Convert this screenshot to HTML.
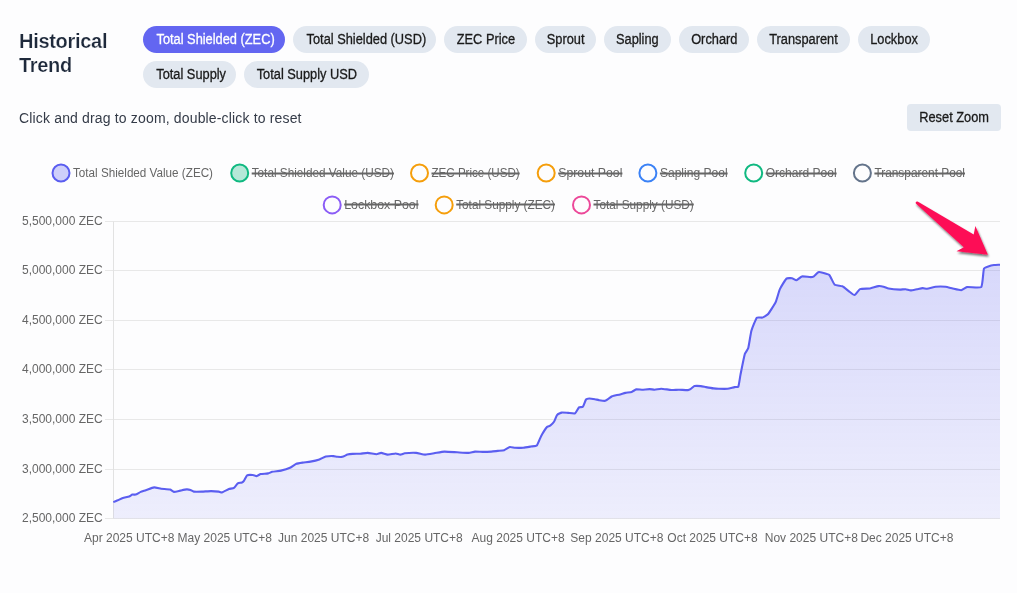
<!DOCTYPE html>
<html><head><meta charset="utf-8"><title>Historical Trend</title><style>
*{margin:0;padding:0;box-sizing:border-box}
html,body{width:1017px;height:593px;overflow:hidden;background:#fdfdfe;font-family:"Liberation Sans",sans-serif}
.h{position:absolute;left:19px;top:29px;font-size:20px;font-weight:bold;line-height:24px;color:#1e293b;letter-spacing:-0.3px;-webkit-text-stroke:0.22px #fdfdfe}
.b{position:absolute;height:26.5px;border-radius:14px;background:#e2e8f0;color:#1a1a1a;font-size:14px;display:flex;align-items:center;justify-content:center;white-space:nowrap}
.b span,.rz span{display:inline-block;transform:scaleX(0.915);-webkit-text-stroke:0.3px currentColor}
.b.on{background:#6366f1;color:#fff}
.hint{position:absolute;left:19px;top:110.4px;font-size:14px;color:#343b48;line-height:16px;letter-spacing:0.16px}
.rz{position:absolute;left:907px;top:104px;width:94px;height:27px;padding-bottom:1.4px;border-radius:4px;background:#e2e8f0;color:#1a1a1a;font-size:14px;display:flex;align-items:center;justify-content:center}
svg{position:absolute;left:0;top:0}
.wrap{position:absolute;left:0;top:0;width:1017px;height:593px;will-change:transform}
</style></head>
<body>
<div class="wrap">
<div class="h">Historical<br>Trend</div>
<div class="b on" style="left:143px;top:26.2px;width:142px;padding-left:3.0px"><span>Total Shielded (ZEC)</span></div><div class="b" style="left:293px;top:26.2px;width:143px;padding-left:3.0px"><span>Total Shielded (USD)</span></div><div class="b" style="left:444px;top:26.2px;width:83px;padding-left:0px"><span>ZEC Price</span></div><div class="b" style="left:535px;top:26.2px;width:61px;padding-left:0px"><span>Sprout</span></div><div class="b" style="left:604px;top:26.2px;width:67px;padding-left:0px"><span>Sapling</span></div><div class="b" style="left:679px;top:26.2px;width:70px;padding-left:0px"><span>Orchard</span></div><div class="b" style="left:757px;top:26.2px;width:93px;padding-left:0px"><span>Transparent</span></div><div class="b" style="left:858px;top:26.2px;width:72px;padding-left:0px"><span>Lockbox</span></div><div class="b" style="left:143px;top:61.2px;width:93px;padding-left:3.0px"><span>Total Supply</span></div><div class="b" style="left:244px;top:61.2px;width:125px;padding-left:0px"><span>Total Supply USD</span></div>
<div class="hint">Click and drag to zoom, double-click to reset</div>
<div class="rz"><span>Reset Zoom</span></div>
<svg width="1017" height="593" viewBox="0 0 1017 593" font-family="Liberation Sans, sans-serif"><defs><linearGradient id="g" x1="0" y1="264" x2="0" y2="518.4" gradientUnits="userSpaceOnUse"><stop offset="0" stop-color="#6366f1" stop-opacity="0.24"/><stop offset="1" stop-color="#6366f1" stop-opacity="0.10"/></linearGradient><filter id="sh" x="-20%" y="-20%" width="150%" height="150%"><feGaussianBlur in="SourceAlpha" stdDeviation="1.3"/><feOffset dx="1" dy="2"/><feComponentTransfer><feFuncA type="linear" slope="0.55"/></feComponentTransfer><feMerge><feMergeNode/><feMergeNode in="SourceGraphic"/></feMerge></filter></defs><line x1="105" y1="221.5" x2="1000" y2="221.5" stroke="#e8e8e8" stroke-width="1"/><text x="102.7" y="225.3" text-anchor="end" font-size="12" fill="#666">5,500,000 ZEC</text><line x1="105" y1="270.5" x2="1000" y2="270.5" stroke="#e8e8e8" stroke-width="1"/><text x="102.7" y="274.3" text-anchor="end" font-size="12" fill="#666">5,000,000 ZEC</text><line x1="105" y1="320.5" x2="1000" y2="320.5" stroke="#e8e8e8" stroke-width="1"/><text x="102.7" y="324.3" text-anchor="end" font-size="12" fill="#666">4,500,000 ZEC</text><line x1="105" y1="369.5" x2="1000" y2="369.5" stroke="#e8e8e8" stroke-width="1"/><text x="102.7" y="373.3" text-anchor="end" font-size="12" fill="#666">4,000,000 ZEC</text><line x1="105" y1="419.5" x2="1000" y2="419.5" stroke="#e8e8e8" stroke-width="1"/><text x="102.7" y="423.3" text-anchor="end" font-size="12" fill="#666">3,500,000 ZEC</text><line x1="105" y1="469.5" x2="1000" y2="469.5" stroke="#e8e8e8" stroke-width="1"/><text x="102.7" y="473.3" text-anchor="end" font-size="12" fill="#666">3,000,000 ZEC</text><line x1="105" y1="518.5" x2="1000" y2="518.5" stroke="#e8e8e8" stroke-width="1"/><text x="102.7" y="522.3" text-anchor="end" font-size="12" fill="#666">2,500,000 ZEC</text><line x1="113.5" y1="221.5" x2="113.5" y2="518.5" stroke="#e2e2e2" stroke-width="1"/><path d="M113.30 502.10 C113.96 501.83 117.05 500.58 117.70 500.30 C118.47 499.97 122.01 498.26 122.80 498.00 C123.73 497.69 128.28 496.83 129.20 496.50 C129.72 496.32 131.88 494.75 132.40 494.60 C132.84 494.47 135.16 494.74 135.60 494.60 C136.40 494.34 139.91 492.23 140.70 491.90 C141.44 491.59 145.04 490.56 145.80 490.30 C147.05 489.88 152.83 487.52 154.10 487.40 C155.13 487.30 160.04 488.65 161.10 488.80 C162.44 488.98 168.81 489.29 170.10 489.60 C170.73 489.75 173.28 491.84 173.90 491.90 C174.81 491.99 179.34 490.79 180.30 490.60 C181.26 490.41 185.74 489.46 186.70 489.40 C187.27 489.37 189.96 489.83 190.50 490.00 C191.01 490.16 193.18 491.53 193.70 491.60 C194.91 491.77 200.76 491.64 202.00 491.60 C203.35 491.56 209.65 491.10 211.00 491.10 C212.16 491.10 217.56 491.45 218.70 491.60 C219.19 491.66 221.44 492.61 221.90 492.50 C222.97 492.24 227.82 489.52 228.90 489.10 C229.63 488.82 233.37 488.21 234.00 487.80 C234.71 487.34 237.10 483.76 237.80 483.30 C238.30 482.97 241.43 482.73 242.00 482.50 C242.34 482.36 243.68 481.11 243.90 480.80 C244.45 480.03 246.39 475.75 247.10 475.30 C247.74 474.88 252.04 474.93 252.90 475.00 C253.48 475.05 256.15 476.16 256.70 476.10 C257.31 476.03 259.97 474.25 260.60 474.10 C261.70 473.84 267.09 473.62 268.20 473.40 C268.81 473.28 271.49 471.93 272.10 471.80 C273.41 471.51 279.69 470.89 281.00 470.60 C282.37 470.29 288.72 468.37 290.00 467.80 C291.03 467.35 295.37 464.22 296.40 463.80 C297.28 463.44 301.75 462.75 302.70 462.60 C303.85 462.42 309.26 461.82 310.40 461.60 C311.76 461.34 318.09 459.84 319.40 459.40 C320.40 459.07 324.79 456.74 325.80 456.50 C326.89 456.24 332.27 456.07 333.40 456.10 C333.99 456.12 336.71 456.75 337.30 456.80 C338.06 456.86 341.67 456.96 342.40 456.80 C343.20 456.63 346.71 454.83 347.50 454.60 C348.24 454.39 351.83 453.95 352.60 453.90 C353.75 453.82 359.15 453.78 360.30 453.70 C361.41 453.63 366.59 452.87 367.70 452.90 C369.04 452.94 375.28 454.20 376.60 454.20 C377.29 454.20 380.42 452.88 381.10 452.90 C382.06 452.94 386.53 454.56 387.50 454.60 C388.73 454.65 394.56 453.50 395.80 453.50 C396.48 453.50 399.63 454.62 400.30 454.60 C400.96 454.59 404.02 453.37 404.70 453.30 C406.41 453.12 414.49 452.79 416.20 452.90 C417.56 452.99 423.85 454.57 425.20 454.60 C426.53 454.63 432.77 453.51 434.10 453.30 C435.65 453.06 442.84 451.67 444.40 451.60 C446.29 451.52 455.19 452.20 457.10 452.30 C458.84 452.39 466.97 452.97 468.70 452.90 C469.66 452.86 474.04 451.67 475.00 451.60 C476.14 451.52 481.54 451.90 482.70 451.90 C484.00 451.90 490.10 451.69 491.40 451.60 C492.36 451.54 496.84 451.00 497.80 450.90 C498.76 450.79 503.30 450.49 504.20 450.20 C505.11 449.91 508.99 447.20 509.90 447.00 C510.61 446.84 514.23 447.76 515.00 447.80 C516.24 447.86 522.06 447.80 523.30 447.70 C524.46 447.61 529.85 446.69 531.00 446.50 C531.87 446.36 536.25 446.07 536.80 445.50 C537.78 444.48 540.44 437.28 541.20 435.90 C541.97 434.51 545.98 428.15 547.00 427.00 C547.33 426.62 549.79 426.00 550.20 425.70 C550.84 425.22 553.56 422.48 554.00 421.80 C554.61 420.84 556.50 415.64 557.20 414.80 C557.66 414.26 560.98 412.73 561.70 412.60 C562.62 412.44 567.14 412.85 568.10 412.90 C569.15 412.95 574.29 413.71 575.10 413.30 C575.92 412.89 578.25 408.02 579.00 407.40 C579.41 407.06 582.46 407.28 582.80 406.90 C583.51 406.10 585.32 400.39 586.00 399.50 C586.28 399.13 588.71 398.52 589.20 398.50 C590.04 398.47 594.05 399.06 594.90 399.20 C595.49 399.30 598.21 400.01 598.80 400.10 C599.75 400.25 604.33 401.05 605.20 400.80 C606.25 400.51 610.61 397.09 611.60 396.50 C611.90 396.32 613.46 395.78 613.80 395.70 C614.75 395.47 619.25 394.63 620.20 394.40 C620.97 394.21 624.52 393.07 625.30 392.90 C626.25 392.69 630.79 392.19 631.70 391.90 C632.42 391.67 635.47 389.56 636.20 389.40 C637.02 389.23 641.13 389.72 642.00 389.70 C643.14 389.67 648.46 389.10 649.60 389.10 C650.37 389.10 653.94 389.73 654.70 389.70 C655.66 389.67 660.14 388.68 661.10 388.70 C662.64 388.73 669.85 389.91 671.40 390.00 C672.54 390.06 677.86 389.69 679.00 389.70 C680.35 389.71 686.67 390.17 688.00 390.10 C688.40 390.08 690.16 389.31 690.50 389.10 C691.12 388.71 693.73 386.30 694.40 386.10 C695.27 385.85 699.85 386.02 700.80 386.10 C701.57 386.17 705.13 386.96 705.90 387.10 C707.04 387.31 712.35 388.25 713.50 388.40 C714.27 388.50 717.92 388.78 718.70 388.80 C720.03 388.84 726.28 388.94 727.60 388.80 C728.67 388.69 733.54 387.31 734.60 387.10 C735.15 386.99 738.09 387.14 738.30 386.70 C738.98 385.26 740.14 376.41 740.50 374.60 C741.13 371.47 744.01 356.83 744.90 353.80 C745.17 352.89 747.94 349.21 748.20 348.30 C748.92 345.76 750.68 333.35 751.40 330.80 C751.98 328.75 755.71 319.03 756.90 317.60 C757.36 317.05 761.64 317.83 762.40 317.60 C763.29 317.33 767.29 315.01 767.90 314.30 C769.27 312.72 774.69 304.22 775.60 302.30 C776.49 300.44 779.04 290.98 779.90 289.10 C780.67 287.42 785.24 279.73 786.50 278.60 C787.06 278.10 791.21 278.06 792.00 278.20 C792.70 278.32 795.78 280.41 796.40 280.30 C797.26 280.14 800.97 276.61 801.90 276.40 C803.10 276.13 809.30 277.10 810.60 277.10 C811.10 277.10 813.49 276.66 813.90 276.40 C814.64 275.93 817.54 272.52 818.30 272.20 C818.86 271.97 822.06 272.54 822.70 272.70 C823.71 272.95 828.61 274.21 829.30 274.90 C830.41 276.01 833.55 283.70 834.70 284.70 C835.51 285.41 841.36 285.82 842.40 286.30 C843.50 286.81 847.99 290.58 849.00 291.30 C849.81 291.88 853.76 295.15 854.50 295.00 C855.41 294.82 858.96 289.53 860.00 289.10 C861.29 288.56 868.53 288.74 870.00 288.50 C871.30 288.29 877.21 286.27 878.50 286.10 C879.24 286.00 882.77 286.52 883.50 286.70 C884.27 286.88 887.72 288.36 888.50 288.50 C890.18 288.80 898.19 289.53 899.90 289.60 C900.75 289.63 904.76 289.14 905.60 289.20 C906.36 289.26 909.85 290.40 910.60 290.40 C911.56 290.40 916.04 289.38 917.00 289.20 C917.86 289.04 921.84 288.13 922.70 288.10 C923.34 288.07 926.36 288.86 927.00 288.80 C928.30 288.67 934.29 286.94 935.60 286.80 C937.07 286.64 944.03 286.65 945.50 286.80 C946.60 286.91 951.62 288.27 952.70 288.50 C953.97 288.78 959.98 290.32 961.20 290.20 C962.11 290.11 965.96 287.25 966.90 287.10 C968.96 286.78 980.09 288.30 981.20 287.10 C982.66 285.51 983.15 270.98 984.00 268.50 C984.22 267.87 987.63 266.64 988.30 266.40 C989.13 266.11 993.13 265.13 994.00 265.00 C994.89 264.87 999.10 264.75 1000.00 264.70 L1000 518.5 L113.5 518.5 Z" fill="url(#g)"/><path d="M113.30 502.10 C113.96 501.83 117.05 500.58 117.70 500.30 C118.47 499.97 122.01 498.26 122.80 498.00 C123.73 497.69 128.28 496.83 129.20 496.50 C129.72 496.32 131.88 494.75 132.40 494.60 C132.84 494.47 135.16 494.74 135.60 494.60 C136.40 494.34 139.91 492.23 140.70 491.90 C141.44 491.59 145.04 490.56 145.80 490.30 C147.05 489.88 152.83 487.52 154.10 487.40 C155.13 487.30 160.04 488.65 161.10 488.80 C162.44 488.98 168.81 489.29 170.10 489.60 C170.73 489.75 173.28 491.84 173.90 491.90 C174.81 491.99 179.34 490.79 180.30 490.60 C181.26 490.41 185.74 489.46 186.70 489.40 C187.27 489.37 189.96 489.83 190.50 490.00 C191.01 490.16 193.18 491.53 193.70 491.60 C194.91 491.77 200.76 491.64 202.00 491.60 C203.35 491.56 209.65 491.10 211.00 491.10 C212.16 491.10 217.56 491.45 218.70 491.60 C219.19 491.66 221.44 492.61 221.90 492.50 C222.97 492.24 227.82 489.52 228.90 489.10 C229.63 488.82 233.37 488.21 234.00 487.80 C234.71 487.34 237.10 483.76 237.80 483.30 C238.30 482.97 241.43 482.73 242.00 482.50 C242.34 482.36 243.68 481.11 243.90 480.80 C244.45 480.03 246.39 475.75 247.10 475.30 C247.74 474.88 252.04 474.93 252.90 475.00 C253.48 475.05 256.15 476.16 256.70 476.10 C257.31 476.03 259.97 474.25 260.60 474.10 C261.70 473.84 267.09 473.62 268.20 473.40 C268.81 473.28 271.49 471.93 272.10 471.80 C273.41 471.51 279.69 470.89 281.00 470.60 C282.37 470.29 288.72 468.37 290.00 467.80 C291.03 467.35 295.37 464.22 296.40 463.80 C297.28 463.44 301.75 462.75 302.70 462.60 C303.85 462.42 309.26 461.82 310.40 461.60 C311.76 461.34 318.09 459.84 319.40 459.40 C320.40 459.07 324.79 456.74 325.80 456.50 C326.89 456.24 332.27 456.07 333.40 456.10 C333.99 456.12 336.71 456.75 337.30 456.80 C338.06 456.86 341.67 456.96 342.40 456.80 C343.20 456.63 346.71 454.83 347.50 454.60 C348.24 454.39 351.83 453.95 352.60 453.90 C353.75 453.82 359.15 453.78 360.30 453.70 C361.41 453.63 366.59 452.87 367.70 452.90 C369.04 452.94 375.28 454.20 376.60 454.20 C377.29 454.20 380.42 452.88 381.10 452.90 C382.06 452.94 386.53 454.56 387.50 454.60 C388.73 454.65 394.56 453.50 395.80 453.50 C396.48 453.50 399.63 454.62 400.30 454.60 C400.96 454.59 404.02 453.37 404.70 453.30 C406.41 453.12 414.49 452.79 416.20 452.90 C417.56 452.99 423.85 454.57 425.20 454.60 C426.53 454.63 432.77 453.51 434.10 453.30 C435.65 453.06 442.84 451.67 444.40 451.60 C446.29 451.52 455.19 452.20 457.10 452.30 C458.84 452.39 466.97 452.97 468.70 452.90 C469.66 452.86 474.04 451.67 475.00 451.60 C476.14 451.52 481.54 451.90 482.70 451.90 C484.00 451.90 490.10 451.69 491.40 451.60 C492.36 451.54 496.84 451.00 497.80 450.90 C498.76 450.79 503.30 450.49 504.20 450.20 C505.11 449.91 508.99 447.20 509.90 447.00 C510.61 446.84 514.23 447.76 515.00 447.80 C516.24 447.86 522.06 447.80 523.30 447.70 C524.46 447.61 529.85 446.69 531.00 446.50 C531.87 446.36 536.25 446.07 536.80 445.50 C537.78 444.48 540.44 437.28 541.20 435.90 C541.97 434.51 545.98 428.15 547.00 427.00 C547.33 426.62 549.79 426.00 550.20 425.70 C550.84 425.22 553.56 422.48 554.00 421.80 C554.61 420.84 556.50 415.64 557.20 414.80 C557.66 414.26 560.98 412.73 561.70 412.60 C562.62 412.44 567.14 412.85 568.10 412.90 C569.15 412.95 574.29 413.71 575.10 413.30 C575.92 412.89 578.25 408.02 579.00 407.40 C579.41 407.06 582.46 407.28 582.80 406.90 C583.51 406.10 585.32 400.39 586.00 399.50 C586.28 399.13 588.71 398.52 589.20 398.50 C590.04 398.47 594.05 399.06 594.90 399.20 C595.49 399.30 598.21 400.01 598.80 400.10 C599.75 400.25 604.33 401.05 605.20 400.80 C606.25 400.51 610.61 397.09 611.60 396.50 C611.90 396.32 613.46 395.78 613.80 395.70 C614.75 395.47 619.25 394.63 620.20 394.40 C620.97 394.21 624.52 393.07 625.30 392.90 C626.25 392.69 630.79 392.19 631.70 391.90 C632.42 391.67 635.47 389.56 636.20 389.40 C637.02 389.23 641.13 389.72 642.00 389.70 C643.14 389.67 648.46 389.10 649.60 389.10 C650.37 389.10 653.94 389.73 654.70 389.70 C655.66 389.67 660.14 388.68 661.10 388.70 C662.64 388.73 669.85 389.91 671.40 390.00 C672.54 390.06 677.86 389.69 679.00 389.70 C680.35 389.71 686.67 390.17 688.00 390.10 C688.40 390.08 690.16 389.31 690.50 389.10 C691.12 388.71 693.73 386.30 694.40 386.10 C695.27 385.85 699.85 386.02 700.80 386.10 C701.57 386.17 705.13 386.96 705.90 387.10 C707.04 387.31 712.35 388.25 713.50 388.40 C714.27 388.50 717.92 388.78 718.70 388.80 C720.03 388.84 726.28 388.94 727.60 388.80 C728.67 388.69 733.54 387.31 734.60 387.10 C735.15 386.99 738.09 387.14 738.30 386.70 C738.98 385.26 740.14 376.41 740.50 374.60 C741.13 371.47 744.01 356.83 744.90 353.80 C745.17 352.89 747.94 349.21 748.20 348.30 C748.92 345.76 750.68 333.35 751.40 330.80 C751.98 328.75 755.71 319.03 756.90 317.60 C757.36 317.05 761.64 317.83 762.40 317.60 C763.29 317.33 767.29 315.01 767.90 314.30 C769.27 312.72 774.69 304.22 775.60 302.30 C776.49 300.44 779.04 290.98 779.90 289.10 C780.67 287.42 785.24 279.73 786.50 278.60 C787.06 278.10 791.21 278.06 792.00 278.20 C792.70 278.32 795.78 280.41 796.40 280.30 C797.26 280.14 800.97 276.61 801.90 276.40 C803.10 276.13 809.30 277.10 810.60 277.10 C811.10 277.10 813.49 276.66 813.90 276.40 C814.64 275.93 817.54 272.52 818.30 272.20 C818.86 271.97 822.06 272.54 822.70 272.70 C823.71 272.95 828.61 274.21 829.30 274.90 C830.41 276.01 833.55 283.70 834.70 284.70 C835.51 285.41 841.36 285.82 842.40 286.30 C843.50 286.81 847.99 290.58 849.00 291.30 C849.81 291.88 853.76 295.15 854.50 295.00 C855.41 294.82 858.96 289.53 860.00 289.10 C861.29 288.56 868.53 288.74 870.00 288.50 C871.30 288.29 877.21 286.27 878.50 286.10 C879.24 286.00 882.77 286.52 883.50 286.70 C884.27 286.88 887.72 288.36 888.50 288.50 C890.18 288.80 898.19 289.53 899.90 289.60 C900.75 289.63 904.76 289.14 905.60 289.20 C906.36 289.26 909.85 290.40 910.60 290.40 C911.56 290.40 916.04 289.38 917.00 289.20 C917.86 289.04 921.84 288.13 922.70 288.10 C923.34 288.07 926.36 288.86 927.00 288.80 C928.30 288.67 934.29 286.94 935.60 286.80 C937.07 286.64 944.03 286.65 945.50 286.80 C946.60 286.91 951.62 288.27 952.70 288.50 C953.97 288.78 959.98 290.32 961.20 290.20 C962.11 290.11 965.96 287.25 966.90 287.10 C968.96 286.78 980.09 288.30 981.20 287.10 C982.66 285.51 983.15 270.98 984.00 268.50 C984.22 267.87 987.63 266.64 988.30 266.40 C989.13 266.11 993.13 265.13 994.00 265.00 C994.89 264.87 999.10 264.75 1000.00 264.70" fill="none" stroke="#5b5ef0" stroke-width="2.1" stroke-linejoin="round" stroke-linecap="butt"/><text x="129.2" y="541.6" text-anchor="middle" font-size="12" fill="#666">Apr 2025 UTC+8</text><text x="224.8" y="541.6" text-anchor="middle" font-size="12" fill="#666">May 2025 UTC+8</text><text x="323.6" y="541.6" text-anchor="middle" font-size="12" fill="#666">Jun 2025 UTC+8</text><text x="419.2" y="541.6" text-anchor="middle" font-size="12" fill="#666">Jul 2025 UTC+8</text><text x="518.1" y="541.6" text-anchor="middle" font-size="12" fill="#666">Aug 2025 UTC+8</text><text x="616.9" y="541.6" text-anchor="middle" font-size="12" fill="#666">Sep 2025 UTC+8</text><text x="712.5" y="541.6" text-anchor="middle" font-size="12" fill="#666">Oct 2025 UTC+8</text><text x="811.3" y="541.6" text-anchor="middle" font-size="12" fill="#666">Nov 2025 UTC+8</text><text x="906.9" y="541.6" text-anchor="middle" font-size="12" fill="#666">Dec 2025 UTC+8</text><circle cx="61" cy="173.0" r="8.5" fill="rgba(99,102,241,0.3)" stroke="#5a5df0" stroke-width="2"/><text x="73.0" y="176.8" font-size="12" fill="#666" textLength="140" lengthAdjust="spacingAndGlyphs">Total Shielded Value (ZEC)</text><circle cx="239.7" cy="173.0" r="8.5" fill="rgba(16,185,129,0.3)" stroke="#10b981" stroke-width="2"/><text x="251.7" y="176.8" font-size="12" fill="#666" textLength="142.3" lengthAdjust="spacingAndGlyphs">Total Shielded Value (USD)</text><line x1="251.7" y1="173.4" x2="394.0" y2="173.4" stroke="#666" stroke-width="2"/><circle cx="419.5" cy="173.0" r="8.5" fill="none" stroke="#f59e0b" stroke-width="2"/><text x="431.5" y="176.8" font-size="12" fill="#666" textLength="88.2" lengthAdjust="spacingAndGlyphs">ZEC Price (USD)</text><line x1="431.5" y1="173.4" x2="519.7" y2="173.4" stroke="#666" stroke-width="2"/><circle cx="546.2" cy="173.0" r="8.5" fill="none" stroke="#f59e0b" stroke-width="2"/><text x="558.2" y="176.8" font-size="12" fill="#666" textLength="64.2" lengthAdjust="spacingAndGlyphs">Sprout Pool</text><line x1="558.2" y1="173.4" x2="622.4" y2="173.4" stroke="#666" stroke-width="2"/><circle cx="647.9" cy="173.0" r="8.5" fill="none" stroke="#3b82f6" stroke-width="2"/><text x="659.9" y="176.8" font-size="12" fill="#666" textLength="67.7" lengthAdjust="spacingAndGlyphs">Sapling Pool</text><line x1="659.9" y1="173.4" x2="727.6" y2="173.4" stroke="#666" stroke-width="2"/><circle cx="753.7" cy="173.0" r="8.5" fill="none" stroke="#10b981" stroke-width="2"/><text x="765.7" y="176.8" font-size="12" fill="#666" textLength="70.9" lengthAdjust="spacingAndGlyphs">Orchard Pool</text><line x1="765.7" y1="173.4" x2="836.6" y2="173.4" stroke="#666" stroke-width="2"/><circle cx="862.4" cy="173.0" r="8.5" fill="none" stroke="#64748b" stroke-width="2"/><text x="874.4" y="176.8" font-size="12" fill="#666" textLength="90.6" lengthAdjust="spacingAndGlyphs">Transparent Pool</text><line x1="874.4" y1="173.4" x2="965.0" y2="173.4" stroke="#666" stroke-width="2"/><circle cx="332.2" cy="204.9" r="8.5" fill="none" stroke="#8b5cf6" stroke-width="2"/><text x="344.2" y="208.9" font-size="12" fill="#666" textLength="74.3" lengthAdjust="spacingAndGlyphs">Lockbox Pool</text><line x1="344.2" y1="204.6" x2="418.5" y2="204.6" stroke="#666" stroke-width="2"/><circle cx="444.2" cy="204.9" r="8.5" fill="none" stroke="#f59e0b" stroke-width="2"/><text x="456.2" y="208.9" font-size="12" fill="#666" textLength="98.8" lengthAdjust="spacingAndGlyphs">Total Supply (ZEC)</text><line x1="456.2" y1="204.6" x2="555.0" y2="204.6" stroke="#666" stroke-width="2"/><circle cx="581.5" cy="204.9" r="8.5" fill="none" stroke="#ec4899" stroke-width="2"/><text x="593.5" y="208.9" font-size="12" fill="#666" textLength="100.3" lengthAdjust="spacingAndGlyphs">Total Supply (USD)</text><line x1="593.5" y1="204.6" x2="693.8" y2="204.6" stroke="#666" stroke-width="2"/><path d="M917.6 201.6 L973.7 234.5 L975.4 226 L987.9 254.7 L956.5 251.2 L963.8 247.3 L916.1 203.7 A1.3 1.3 0 0 1 917.6 201.6 Z" fill="#fd1157" filter="url(#sh)"/></svg>
</div>
</body></html>
